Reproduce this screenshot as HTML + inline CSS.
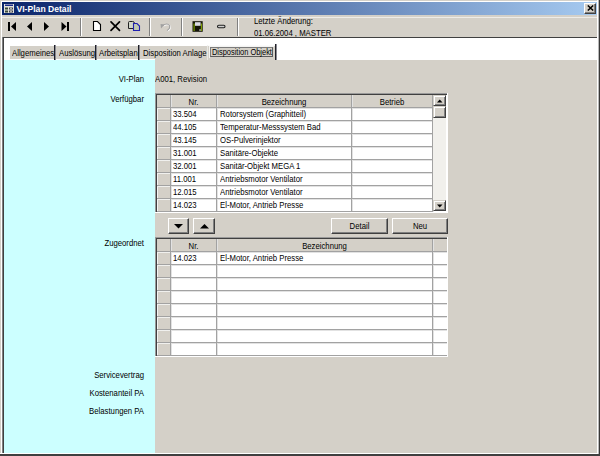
<!DOCTYPE html>
<html><head><meta charset="utf-8">
<style>
*{margin:0;padding:0;box-sizing:border-box}
html,body{width:600px;height:456px;overflow:hidden;background:#d4d0c8}
body{position:relative;font-family:"Liberation Sans",sans-serif;font-size:8.2px;color:#000}
.a{position:absolute}
.t{position:absolute;white-space:nowrap;line-height:10px;font-size:8.6px;transform:scaleX(.9);transform-origin:0 0}
.r{text-align:right;transform-origin:100% 0}
.c{text-align:center;transform-origin:50% 0}
.btn{position:absolute;background:#d4d0c8;border-top:1px solid #fff;border-left:1px solid #fff;border-right:1px solid #404040;border-bottom:1px solid #404040;box-shadow:inset -1px -1px 0 #808080}
.sep{position:absolute;top:18px;width:2px;height:18px;border-left:1px solid #808080;border-right:1px solid #fff}
</style></head><body>
<!-- window frame -->
<div class="a" style="left:1px;top:1px;width:597px;height:1px;background:#fff"></div>
<div class="a" style="left:1px;top:1px;width:1px;height:453px;background:#fff"></div>
<div class="a" style="left:597px;top:0;width:1px;height:454px;background:#fff"></div>
<div class="a" style="left:598px;top:0;width:1px;height:456px;background:#b8b8b8"></div><div class="a" style="left:599px;top:0;width:1px;height:456px;background:#383838"></div>
<div class="a" style="left:0;top:453px;width:598px;height:1px;background:#fff"></div>
<div class="a" style="left:0;top:454px;width:600px;height:2px;background:#404040"></div>

<!-- title bar -->
<div class="a" style="left:2px;top:2px;width:595px;height:13px;background:linear-gradient(to right,#0a246a,#a6caf0)"></div>
<svg class="a" style="left:4px;top:4px" width="10" height="9" viewBox="0 0 10 9">
 <rect x="0" y="0" width="10" height="9" fill="#e4e4dc"/>
 <rect x="1" y="0.5" width="8" height="1.5" fill="#1a2a8a"/>
 <rect x="1" y="3.5" width="3" height="2" fill="#3a4a3a"/>
 <rect x="5" y="3.5" width="4" height="2" fill="#404050"/>
 <rect x="6" y="4" width="2" height="1" fill="#b0b0a8"/>
 <rect x="1" y="6.5" width="3" height="2" fill="#3a4a3a"/>
 <rect x="5" y="6.5" width="4" height="2" fill="#404050"/>
 <rect x="6" y="7" width="2" height="1" fill="#b0b0a8"/>
</svg>
<div class="t" style="left:16.5px;top:4px;font-size:8.6px;font-weight:bold;color:#fff;transform:none">VI-Plan Detail</div>
<!-- close button -->
<div class="btn" style="left:584px;top:3px;width:12px;height:11px"></div>
<svg class="a" style="left:587px;top:5px" width="7" height="6" viewBox="0 0 7 6">
 <path d="M0.8 0.5 L6.2 5.5 M6.2 0.5 L0.8 5.5" stroke="#000" stroke-width="1.5"/>
</svg>

<!-- toolbar -->
<div class="a" style="left:2px;top:17px;width:595px;height:1px;background:#eeece8"></div>
<svg class="a" style="left:0;top:15px" width="240" height="22" viewBox="0 15 240 22">
 <rect x="8" y="22" width="2" height="9" fill="#000"/>
 <polygon points="16,22 11,26.5 16,31" fill="#000"/>
 <polygon points="32,22 27,26.5 32,31" fill="#000"/>
 <polygon points="44,22 49,26.5 44,31" fill="#000"/>
 <polygon points="61.5,22 66.5,26.5 61.5,31" fill="#000"/>
 <rect x="67" y="22" width="2" height="9" fill="#000"/>
 <path d="M93.5 21.5 H97.5 L100.5 24.5 V30.5 H93.5 Z" fill="#fff" stroke="#000" stroke-width="1.1"/>
 <path d="M111 21.8 L119.5 30.3 M119.5 21.8 L111 30.3" stroke="#000" stroke-width="1.7" stroke-linecap="round"/>
 <path d="M128.5 22.5 Q128.5 21.5 129.5 21.5 H132.5 Q134.5 21.5 134.5 23.5 V28.5 H128.5 Z" fill="#d0d4c8" stroke="#202020" stroke-width="1"/>
 <path d="M133.5 23.5 H137 L139.5 26 V30.5 H133.5 Z" fill="#c0c8b0" stroke="#2020b0" stroke-width="1.1"/>
 <path d="M163 25.5 Q167 22.5 169.5 25.5 Q170.5 28.5 167 30.5" fill="none" stroke="#fff" stroke-width="1.1" transform="translate(0.6,0.6)"/>
 <path d="M163 25.5 Q167 22.5 169.5 25.5 Q170.5 28.5 167 30.5" fill="none" stroke="#a0a0a0" stroke-width="1.1"/>
 <polygon points="160.5,24 164.5,24.5 161,28.5" fill="#a0a0a0"/>
 <rect x="192.5" y="21.2" width="10.2" height="10.6" fill="#141408"/>
 <rect x="193.5" y="23.5" width="1.2" height="7.5" fill="#7a9c00"/>
 <rect x="200.8" y="23.5" width="1.2" height="7.5" fill="#7a9c00"/>
 <rect x="195" y="22.2" width="5.6" height="3.6" fill="#dcdce4"/>
 <rect x="199.3" y="29.3" width="1.5" height="1.5" fill="#c4c4cc"/>
 <rect x="217.5" y="25.3" width="7.5" height="2.4" rx="1.2" fill="#d0d0d0" stroke="#202020" stroke-width="1.1"/>
</svg>
<div class="sep" style="left:80px"></div>
<div class="sep" style="left:149px"></div>
<div class="sep" style="left:181px"></div>
<div class="sep" style="left:237px"></div>
<div class="t" style="left:254px;top:16px">Letzte Änderung:</div>
<div class="t" style="left:254px;top:28px">01.06.2004 , MASTER</div>

<!-- client area -->
<div class="a" style="left:2px;top:37px;width:595px;height:1px;background:#404040"></div>
<div class="a" style="left:2px;top:37px;width:1px;height:416px;background:#808080"></div><div class="a" style="left:3px;top:37px;width:1px;height:416px;background:#404040"></div>
<div class="a" style="left:4px;top:38px;width:593px;height:415px;background:#fff"></div>

<!-- tabs -->
<div class="a" style="left:10px;top:46px;width:146px;height:13px;background:#d4d0c8"></div><div class="a" style="left:155px;top:46px;width:53px;height:14px;background:#d4d0c8"></div>
<div class="a" style="left:54px;top:45px;width:1px;height:15px;background:#202028"></div><div class="a" style="left:55px;top:45px;width:1px;height:15px;background:#8a8a92"></div>
<div class="a" style="left:95px;top:45px;width:1px;height:15px;background:#202028"></div><div class="a" style="left:96px;top:45px;width:1px;height:15px;background:#8a8a92"></div>
<div class="a" style="left:138px;top:45px;width:1px;height:15px;background:#202028"></div><div class="a" style="left:139px;top:45px;width:1px;height:15px;background:#8a8a92"></div>
<div class="a" style="left:207px;top:45px;width:68px;height:15px;background:#d4d0c8;border-left:1px solid #e8e8e4;border-top:1px solid #fbfbfb"></div>
<div class="a" style="left:275px;top:44px;width:1px;height:16px;background:#202028"></div><div class="a" style="left:276px;top:44px;width:1px;height:16px;background:#8a8a92"></div>
<div class="a" style="left:209px;top:46px;width:65px;height:12px;border-top:1px solid #f4f4f2;border-left:1px solid #f4f4f2"></div><div class="a" style="left:210px;top:47px;width:63px;height:10px;border:1px solid #7c7c7c;border-right-color:#5c5c5c;border-bottom-color:#5c5c5c"></div>
<div class="t" style="left:12px;top:48px">Allgemeines</div>
<div class="t" style="left:58.5px;top:48px">Auslösung</div>
<div class="t" style="left:99px;top:48px">Arbeitsplan</div>
<div class="t" style="left:143px;top:48px">Disposition Anlage</div>
<div class="t" style="left:211.5px;top:46.5px;transform:scaleX(.865)">Disposition Objekt</div>

<!-- form body -->
<div class="a" style="left:4px;top:60px;width:151px;height:393px;background:#ccffff"></div>
<div class="a" style="left:155px;top:60px;width:442px;height:393px;background:#d4d0c8"></div>

<div class="t r" style="left:60px;width:84px;top:74px">VI-Plan</div>
<div class="t" style="left:154.5px;top:74px">A001, Revision</div>
<div class="t r" style="left:60px;width:84px;top:94px">Verfügbar</div>
<div class="t r" style="left:60px;width:84px;top:238px">Zugeordnet</div>
<div class="t r" style="left:40px;width:104px;top:369.6px">Servicevertrag</div>
<div class="t r" style="left:40px;width:104px;top:387.8px">Kostenanteil PA</div>
<div class="t r" style="left:40px;width:104px;top:405.6px">Belastungen PA</div>

<!-- GRID1 -->
<!--G1S-->
<div class="a" style="left:155px;top:93px;width:293px;height:120px;background:#fff;"></div>
<div class="a" style="left:155px;top:93px;width:292px;height:1px;background:#9a9a9a;"></div>
<div class="a" style="left:155px;top:93px;width:1px;height:119px;background:#9a9a9a;"></div>
<div class="a" style="left:156px;top:94px;width:291px;height:1px;background:#404040;"></div>
<div class="a" style="left:156px;top:94px;width:1px;height:118px;background:#404040;"></div>
<div class="a" style="left:155px;top:212px;width:293px;height:1px;background:#fff;"></div>
<div class="a" style="left:447px;top:93px;width:1px;height:120px;background:#fff;"></div>
<div class="a" style="left:157px;top:95px;width:275px;height:12px;background:#d4d0c8;"></div>
<div class="a" style="left:157px;top:95px;width:13px;height:117px;background:#d4d0c8;"></div>
<div class="a" style="left:157px;top:108px;width:1px;height:104px;background:#f4f4f4;"></div>
<div class="a" style="left:157px;top:108px;width:275px;height:1px;background:#e2e2e2;"></div>
<div class="a" style="left:157px;top:108px;width:13px;height:1px;background:#f0f0ee;"></div>
<div class="a" style="left:157px;top:121px;width:275px;height:1px;background:#e2e2e2;"></div>
<div class="a" style="left:157px;top:121px;width:13px;height:1px;background:#f0f0ee;"></div>
<div class="a" style="left:157px;top:134px;width:275px;height:1px;background:#e2e2e2;"></div>
<div class="a" style="left:157px;top:134px;width:13px;height:1px;background:#f0f0ee;"></div>
<div class="a" style="left:157px;top:147px;width:275px;height:1px;background:#e2e2e2;"></div>
<div class="a" style="left:157px;top:147px;width:13px;height:1px;background:#f0f0ee;"></div>
<div class="a" style="left:157px;top:160px;width:275px;height:1px;background:#e2e2e2;"></div>
<div class="a" style="left:157px;top:160px;width:13px;height:1px;background:#f0f0ee;"></div>
<div class="a" style="left:157px;top:173px;width:275px;height:1px;background:#e2e2e2;"></div>
<div class="a" style="left:157px;top:173px;width:13px;height:1px;background:#f0f0ee;"></div>
<div class="a" style="left:157px;top:186px;width:275px;height:1px;background:#e2e2e2;"></div>
<div class="a" style="left:157px;top:186px;width:13px;height:1px;background:#f0f0ee;"></div>
<div class="a" style="left:157px;top:199px;width:275px;height:1px;background:#e2e2e2;"></div>
<div class="a" style="left:157px;top:199px;width:13px;height:1px;background:#f0f0ee;"></div>
<div class="a" style="left:171px;top:95px;width:1px;height:117px;background:#e2e2e2;"></div>
<div class="a" style="left:217px;top:95px;width:1px;height:117px;background:#e2e2e2;"></div>
<div class="a" style="left:352px;top:95px;width:1px;height:117px;background:#e2e2e2;"></div>
<div class="a" style="left:433px;top:95px;width:1px;height:117px;background:#e2e2e2;"></div>
<div class="a" style="left:157px;top:107px;width:275px;height:1px;background:#a2a2a2;"></div>
<div class="a" style="left:157px;top:120px;width:275px;height:1px;background:#a2a2a2;"></div>
<div class="a" style="left:157px;top:133px;width:275px;height:1px;background:#a2a2a2;"></div>
<div class="a" style="left:157px;top:146px;width:275px;height:1px;background:#a2a2a2;"></div>
<div class="a" style="left:157px;top:159px;width:275px;height:1px;background:#a2a2a2;"></div>
<div class="a" style="left:157px;top:172px;width:275px;height:1px;background:#a2a2a2;"></div>
<div class="a" style="left:157px;top:185px;width:275px;height:1px;background:#a2a2a2;"></div>
<div class="a" style="left:157px;top:198px;width:275px;height:1px;background:#a2a2a2;"></div>
<div class="a" style="left:157px;top:211px;width:275px;height:1px;background:#a2a2a2;"></div>
<div class="a" style="left:170px;top:95px;width:1px;height:117px;background:#a2a2a2;"></div>
<div class="a" style="left:216px;top:95px;width:1px;height:117px;background:#a2a2a2;"></div>
<div class="a" style="left:351px;top:95px;width:1px;height:117px;background:#a2a2a2;"></div>
<div class="a" style="left:432px;top:95px;width:1px;height:117px;background:#a2a2a2;"></div>
<div class="t c" style="left:171px;width:45px;top:97px">Nr.</div>
<div class="t c" style="left:217px;width:134px;top:97px">Bezeichnung</div>
<div class="t c" style="left:352px;width:80px;top:97px">Betrieb</div>
<div class="t" style="left:173px;top:109px">33.504</div>
<div class="t" style="left:219.5px;top:109px">Rotorsystem (Graphitteil)</div>
<div class="t" style="left:173px;top:122px">44.105</div>
<div class="t" style="left:219.5px;top:122px">Temperatur-Messsystem Bad</div>
<div class="t" style="left:173px;top:135px">43.145</div>
<div class="t" style="left:219.5px;top:135px">OS-Pulverinjektor</div>
<div class="t" style="left:173px;top:148px">31.001</div>
<div class="t" style="left:219.5px;top:148px">Sanitäre-Objekte</div>
<div class="t" style="left:173px;top:161px">32.001</div>
<div class="t" style="left:219.5px;top:161px">Sanitär-Objekt MEGA 1</div>
<div class="t" style="left:173px;top:174px">11.001</div>
<div class="t" style="left:219.5px;top:174px">Antriebsmotor Ventilator</div>
<div class="t" style="left:173px;top:187px">12.015</div>
<div class="t" style="left:219.5px;top:187px">Antriebsmotor Ventilator</div>
<div class="t" style="left:173px;top:200px">14.023</div>
<div class="t" style="left:219.5px;top:200px">El-Motor, Antrieb Presse</div>
<div class="a" style="left:433px;top:95px;width:13px;height:116px;background:#f1f0ec;"></div>
<div class="btn" style="left:433px;top:95px;width:13px;height:11px;border-top-color:#d4d0c8;border-left-color:#d4d0c8;box-shadow:inset 1px 1px 0 #fff,inset -1px -1px 0 #808080"></div>
<svg class="a" style="left:437px;top:99px" width="6" height="4"><polygon points="0,3.5 5.5,3.5 2.75,0.5" fill="#000"/></svg>
<div class="btn" style="left:433px;top:106px;width:13px;height:12px;border-top-color:#d4d0c8;border-left-color:#d4d0c8;box-shadow:inset 1px 1px 0 #fff,inset -1px -1px 0 #808080"></div>
<div class="btn" style="left:433px;top:200px;width:13px;height:11px;border-top-color:#d4d0c8;border-left-color:#d4d0c8;box-shadow:inset 1px 1px 0 #fff,inset -1px -1px 0 #808080"></div>
<svg class="a" style="left:437px;top:204px" width="6" height="4"><polygon points="0,0.5 5.5,0.5 2.75,3.5" fill="#000"/></svg>
<!--G1E-->
<!-- GRID2 -->
<!--G2S-->
<div class="a" style="left:155px;top:237px;width:293px;height:120px;background:#fff;"></div>
<div class="a" style="left:155px;top:237px;width:292px;height:1px;background:#9a9a9a;"></div>
<div class="a" style="left:155px;top:237px;width:1px;height:119px;background:#9a9a9a;"></div>
<div class="a" style="left:156px;top:238px;width:291px;height:1px;background:#404040;"></div>
<div class="a" style="left:156px;top:238px;width:1px;height:118px;background:#404040;"></div>
<div class="a" style="left:155px;top:356px;width:293px;height:1px;background:#fff;"></div>
<div class="a" style="left:447px;top:237px;width:1px;height:120px;background:#fff;"></div>
<div class="a" style="left:157px;top:239px;width:290px;height:12px;background:#d4d0c8;"></div>
<div class="a" style="left:157px;top:239px;width:13px;height:117px;background:#d4d0c8;"></div>
<div class="a" style="left:157px;top:252px;width:1px;height:104px;background:#f4f4f4;"></div>
<div class="a" style="left:157px;top:252px;width:290px;height:1px;background:#e2e2e2;"></div>
<div class="a" style="left:157px;top:252px;width:13px;height:1px;background:#f0f0ee;"></div>
<div class="a" style="left:157px;top:265px;width:290px;height:1px;background:#e2e2e2;"></div>
<div class="a" style="left:157px;top:265px;width:13px;height:1px;background:#f0f0ee;"></div>
<div class="a" style="left:157px;top:278px;width:290px;height:1px;background:#e2e2e2;"></div>
<div class="a" style="left:157px;top:278px;width:13px;height:1px;background:#f0f0ee;"></div>
<div class="a" style="left:157px;top:291px;width:290px;height:1px;background:#e2e2e2;"></div>
<div class="a" style="left:157px;top:291px;width:13px;height:1px;background:#f0f0ee;"></div>
<div class="a" style="left:157px;top:304px;width:290px;height:1px;background:#e2e2e2;"></div>
<div class="a" style="left:157px;top:304px;width:13px;height:1px;background:#f0f0ee;"></div>
<div class="a" style="left:157px;top:317px;width:290px;height:1px;background:#e2e2e2;"></div>
<div class="a" style="left:157px;top:317px;width:13px;height:1px;background:#f0f0ee;"></div>
<div class="a" style="left:157px;top:330px;width:290px;height:1px;background:#e2e2e2;"></div>
<div class="a" style="left:157px;top:330px;width:13px;height:1px;background:#f0f0ee;"></div>
<div class="a" style="left:157px;top:343px;width:290px;height:1px;background:#e2e2e2;"></div>
<div class="a" style="left:157px;top:343px;width:13px;height:1px;background:#f0f0ee;"></div>
<div class="a" style="left:171px;top:239px;width:1px;height:117px;background:#e2e2e2;"></div>
<div class="a" style="left:217px;top:239px;width:1px;height:117px;background:#e2e2e2;"></div>
<div class="a" style="left:433px;top:239px;width:1px;height:117px;background:#e2e2e2;"></div>
<div class="a" style="left:157px;top:251px;width:290px;height:1px;background:#a2a2a2;"></div>
<div class="a" style="left:157px;top:264px;width:290px;height:1px;background:#a2a2a2;"></div>
<div class="a" style="left:157px;top:277px;width:290px;height:1px;background:#a2a2a2;"></div>
<div class="a" style="left:157px;top:290px;width:290px;height:1px;background:#a2a2a2;"></div>
<div class="a" style="left:157px;top:303px;width:290px;height:1px;background:#a2a2a2;"></div>
<div class="a" style="left:157px;top:316px;width:290px;height:1px;background:#a2a2a2;"></div>
<div class="a" style="left:157px;top:329px;width:290px;height:1px;background:#a2a2a2;"></div>
<div class="a" style="left:157px;top:342px;width:290px;height:1px;background:#a2a2a2;"></div>
<div class="a" style="left:157px;top:355px;width:290px;height:1px;background:#a2a2a2;"></div>
<div class="a" style="left:170px;top:239px;width:1px;height:117px;background:#a2a2a2;"></div>
<div class="a" style="left:216px;top:239px;width:1px;height:117px;background:#a2a2a2;"></div>
<div class="a" style="left:432px;top:239px;width:1px;height:117px;background:#a2a2a2;"></div>
<div class="t c" style="left:171px;width:45px;top:241px">Nr.</div>
<div class="t c" style="left:217px;width:215px;top:241px">Bezeichnung</div>
<div class="t" style="left:173px;top:253px">14.023</div>
<div class="t" style="left:219.5px;top:253px">El-Motor, Antrieb Presse</div>
<!--G2E-->

<!-- buttons -->
<div class="btn" style="left:168px;top:218px;width:21px;height:16px"></div>
<svg class="a" style="left:174px;top:224px" width="10" height="5"><polygon points="0,0 9,0 4.5,4.5" fill="#000"/></svg>
<div class="btn" style="left:193px;top:218px;width:22px;height:16px"></div>
<svg class="a" style="left:200px;top:223.5px" width="10" height="5"><polygon points="0,4.5 9,4.5 4.5,0" fill="#000"/></svg>
<div class="btn" style="left:331px;top:218px;width:57px;height:16px"></div>
<div class="t c" style="left:331px;width:57px;top:221px">Detail</div>
<div class="btn" style="left:392px;top:218px;width:56px;height:16px"></div>
<div class="t c" style="left:392px;width:56px;top:221px">Neu</div>
</body></html>
